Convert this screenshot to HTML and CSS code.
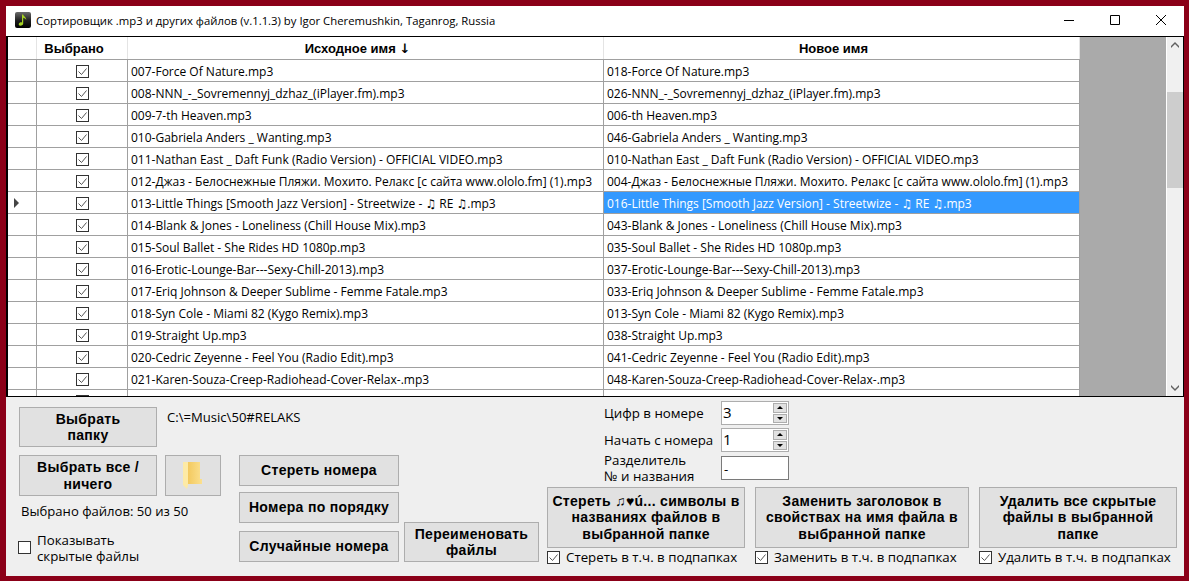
FILE: index.html
```html
<!DOCTYPE html>
<html lang="ru">
<head>
    <meta charset="UTF-8">
    <title>Сортировщик .mp3</title>
    <link rel="stylesheet" href="styles.css">
</head>
<body>
    <div class="window">
        <div class="titlebar">
            <svg class="app-icon" width="16" height="16" viewBox="0 0 16 16">
                <defs>
                    <linearGradient id="iconBg" x1="0" y1="0" x2="0" y2="1">
                        <stop offset="0" stop-color="#6a6a6a"/>
                        <stop offset="0.55" stop-color="#1c1c1c"/>
                        <stop offset="1" stop-color="#000"/>
                    </linearGradient>
                </defs>
                <rect width="16" height="16" rx="2" fill="url(#iconBg)"/>
                <path d="M7 2.500h1.200c.3 2 3.300 2.600 3 5.500-.6-1.500-1.900-2-3-2.300V11.500c0 1.300-1.300 2.200-2.700 2.200S3.500 13 3.800 11.800c.3-1.100 2-1.800 3.200-1.300z" fill="#a6d324"/>
            </svg>
            <span class="title-text">Сортировщик .mp3 и других файлов (v.1.1.3) by Igor Cheremushkin, Taganrog, Russia</span>
            <div class="win-buttons">
                <svg width="46" height="30" viewBox="0 0 46 30"><path d="M18 14.500h10" stroke="#000" fill="none"/></svg>
                <svg width="46" height="30" viewBox="0 0 46 30"><path d="M18.500 9.500h9v9h-9z" stroke="#000" fill="none"/></svg>
                <svg width="46" height="30" viewBox="0 0 46 30"><path d="M18 9l10 10M28 9L18 19" stroke="#000" fill="none"/></svg>
            </div>
        </div>

        <div class="grid-box">
            <div class="grid-body">
                <div class="grid-row grid-head">
                    <div class="c c-mark"></div>
                    <div class="c c-check">Выбрано</div>
                    <div class="c c-name">Исходное имя&nbsp;<span class="sort-arrow">↓</span></div>
                    <div class="c c-name">Новое имя</div>
                </div>
                <div id="rows"></div>
            </div>
            <div class="grid-empty"></div>
            <div class="scrollbar">
                <svg width="16" height="16" viewBox="0 0 16 16"><path d="M4 9l4-4 4 4v2L8 7l-4 4z" fill="#606060"/></svg>
                <div class="scroll-track"><div class="scroll-thumb"></div></div>
                <svg width="16" height="16" viewBox="0 0 16 16"><path d="M4 5l4 4 4-4v2l-4 4-4-4z" fill="#606060"/></svg>
            </div>
        </div>

        <div class="panel">
            <div class="col-left">
                <div class="left-top">
                    <button class="btn btn-main">Выбрать<br>папку</button>
                    <span class="path">C:\=Music\50#RELAKS</span>
                </div>
                <div class="left-mid">
                    <button class="btn btn-main btn-all">Выбрать все /<br>ничего</button>
                    <button class="btn btn-folder">
                        <svg width="20" height="27" viewBox="0 0 20 27">
                            <defs>
                                <linearGradient id="folderBack" x1="0" y1="0" x2="1" y2="0">
                                    <stop offset="0" stop-color="#f3c95f"/>
                                    <stop offset="1" stop-color="#fbe08f"/>
                                </linearGradient>
                            </defs>
                            <path d="M5 0h12v17h2v5H5z" fill="url(#folderBack)"/>
                            <path d="M0 0h5v23l-1 4-1-1-3-3z" fill="#fdeaa6"/>
                        </svg>
                    </button>
                </div>
                <div class="count">Выбрано файлов: 50 из 50</div>
                <label class="hidden-check">
                    <span class="box"></span>
                    <span>Показывать<br>скрытые файлы</span>
                </label>
            </div>

            <div class="col-numbers">
                <button class="btn btn-num">Стереть номера</button>
                <button class="btn btn-num btn-num-mid">Номера по порядку</button>
                <button class="btn btn-num">Случайные номера</button>
            </div>

            <div class="col-right">
                <div class="settings">
                    <div class="setting">
                        <span class="setting-label">Цифр в номере</span>
                        <div class="spin"><span>3</span><div class="spin-arrows"><i class="up"></i><i class="down"></i></div></div>
                    </div>
                    <div class="setting">
                        <span class="setting-label">Начать с номера</span>
                        <div class="spin"><span>1</span><div class="spin-arrows"><i class="up"></i><i class="down"></i></div></div>
                    </div>
                    <div class="setting setting-sep">
                        <span class="setting-label">Разделитель<br>№ и названия</span>
                        <div class="sep-input">-</div>
                    </div>
                </div>
                <div class="actions">
                    <button class="btn btn-rename">Переименовать<br>файлы</button>
                    <div class="action action-a">
                        <button class="btn btn-action">Стереть ♫♥ú... символы в<br>названиях файлов в<br>выбранной папке</button>
                        <label class="check-line"><span class="box checked"><svg width="13" height="13" viewBox="0 0 13 13"><path d="M2.500 6.500l3 3 5-6" stroke="#555" fill="none"/></svg></span>Стереть в т.ч. в подпапках</label>
                    </div>
                    <div class="action action-b">
                        <button class="btn btn-action">Заменить заголовок в<br>свойствах на имя файла в<br>выбранной папке</button>
                        <label class="check-line"><span class="box checked"><svg width="13" height="13" viewBox="0 0 13 13"><path d="M2.500 6.500l3 3 5-6" stroke="#555" fill="none"/></svg></span>Заменить в т.ч. в подпапках</label>
                    </div>
                    <div class="action action-c">
                        <button class="btn btn-action">Удалить все скрытые<br>файлы в выбранной<br>папке</button>
                        <label class="check-line"><span class="box checked"><svg width="13" height="13" viewBox="0 0 13 13"><path d="M2.500 6.500l3 3 5-6" stroke="#555" fill="none"/></svg></span>Удалить в т.ч. в подпапках</label>
                    </div>
                </div>
            </div>
        </div>
    </div>

    <script>
        const files = [
            ['007-Force Of Nature.mp3', '018-Force Of Nature.mp3'],
            ['008-NNN_-_Sovremennyj_dzhaz_(iPlayer.fm).mp3', '026-NNN_-_Sovremennyj_dzhaz_(iPlayer.fm).mp3'],
            ['009-7-th Heaven.mp3', '006-th Heaven.mp3'],
            ['010-Gabriela Anders _ Wanting.mp3', '046-Gabriela Anders _ Wanting.mp3'],
            ['011-Nathan East _ Daft Funk (Radio Version) - OFFICIAL VIDEO.mp3', '010-Nathan East _ Daft Funk (Radio Version) - OFFICIAL VIDEO.mp3'],
            ['012-Джаз - Белоснежные Пляжи. Мохито. Релакс [с сайта www.ololo.fm] (1).mp3', '004-Джаз - Белоснежные Пляжи. Мохито. Релакс [с сайта www.ololo.fm] (1).mp3'],
            ['013-Little Things [Smooth Jazz Version] - Streetwize - ♫ RE ♫.mp3', '016-Little Things [Smooth Jazz Version] - Streetwize - ♫ RE ♫.mp3'],
            ['014-Blank & Jones - Loneliness (Chill House Mix).mp3', '043-Blank & Jones - Loneliness (Chill House Mix).mp3'],
            ['015-Soul Ballet - She Rides HD 1080p.mp3', '035-Soul Ballet - She Rides HD 1080p.mp3'],
            ['016-Erotic-Lounge-Bar---Sexy-Chill-2013).mp3', '037-Erotic-Lounge-Bar---Sexy-Chill-2013).mp3'],
            ['017-Eriq Johnson & Deeper Sublime - Femme Fatale.mp3', '033-Eriq Johnson & Deeper Sublime - Femme Fatale.mp3'],
            ['018-Syn Cole - Miami 82 (Kygo Remix).mp3', '013-Syn Cole - Miami 82 (Kygo Remix).mp3'],
            ['019-Straight Up.mp3', '038-Straight Up.mp3'],
            ['020-Cedric Zeyenne - Feel You (Radio Edit).mp3', '041-Cedric Zeyenne - Feel You (Radio Edit).mp3'],
            ['021-Karen-Souza-Creep-Radiohead-Cover-Relax-.mp3', '048-Karen-Souza-Creep-Radiohead-Cover-Relax-.mp3'],
            ['', '']
        ];
        const checkSvg = '<span class="box checked"><svg width="13" height="13" viewBox="0 0 13 13"><path d="M2.500 6.500l3 3 5-6" stroke="#555" fill="none"/></svg></span>';
        const rows = document.getElementById('rows');
        files.forEach(([from, to], i) => {
            const row = document.createElement('div');
            row.className = 'grid-row';
            const active = i === 6;
            row.innerHTML =
                `<div class="c c-mark">${active ? '<i class="pointer"></i>' : ''}</div>` +
                `<div class="c c-check">${checkSvg}</div>` +
                `<div class="c c-name"></div>` +
                `<div class="c c-name${active ? ' selected' : ''}"></div>`;
            row.children[2].textContent = from;
            row.children[3].textContent = to;
            rows.appendChild(row);
        });
    </script>
</body>
</html>
```

FILE: styles.css
```css
* {
    box-sizing: border-box;
}
html, body {
    height: 100%;
}
body {
    margin: 0;
    padding: 6px 5px 5px 6px;
    background-color: #8b0018;
    font-family: "Open Sans", "DejaVu Sans", sans-serif;
    font-size: 12px;
    color: #000;
    overflow: hidden;
}
.window {
    height: 570px;
    display: flex;
    flex-direction: column;
    background-color: #efefef;
}
.titlebar {
    height: 30px;
    flex: none;
    display: flex;
    align-items: center;
    padding-left: 9px;
    background-color: #fff;
}
.app-icon {
    margin: -3px 5px 0 0;
}
.title-text {
    flex: 1;
    font-size: 11.33px;
    padding-bottom: 2px;
}
.win-buttons {
    display: flex;
}
.win-buttons svg {
    display: block;
}

.grid-box {
    height: 361px;
    flex: none;
    display: flex;
    border: 1px solid #000;
    border-left-width: 2px;
    background-color: #aaa;
    overflow: hidden;
}
.grid-body {
    width: 1072px;
    flex: none;
    background-color: #fff;
}
.grid-row {
    display: flex;
    height: 22px;
    border-bottom: 1px solid #a0a0a0;
}
.grid-head {
    height: 23px;
    font-family: "Liberation Sans", sans-serif;
    font-weight: bold;
    font-size: 13px;
}
.sort-arrow {
    font-family: "DejaVu Sans", sans-serif;
}
.c {
    height: 100%;
    display: flex;
    align-items: center;
    padding-top: 1px;
    border-right: 1px solid #a0a0a0;
    white-space: nowrap;
    overflow: hidden;
}
.c-mark {
    width: 29px;
    padding-left: 6px;
}
.c-check {
    width: 91px;
    justify-content: center;
}
.c-name {
    width: 476px;
    padding-left: 3px;
}
.grid-head .c-name,
.grid-head .c-check {
    justify-content: center;
    padding-left: 0;
    padding-right: 16px;
}
.grid-head .c {
    border-right-color: #e4e4e4;
}
.selected {
    background-color: #3399ff;
    color: #fff;
}
.pointer {
    width: 0;
    height: 0;
    border-left: 5px solid #444;
    border-top: 5px solid transparent;
    border-bottom: 5px solid transparent;
}
.grid-empty {
    flex: 1;
}
.scrollbar {
    width: 17px;
    flex: none;
    display: flex;
    flex-direction: column;
    align-items: center;
    background-color: #f0f0f0;
    border-left: 1px solid #fff;
}
.scrollbar svg {
    flex: none;
}
.scroll-track {
    flex: 1;
    width: 100%;
    padding-top: 39px;
}
.scroll-thumb {
    height: 96px;
    background-color: #cdcdcd;
}

.box {
    width: 13px;
    height: 13px;
    flex: none;
    display: block;
    background-color: #fff;
    border: 1px solid #333;
}
.box svg {
    display: block;
    margin: -1px;
}

.panel {
    flex: 1;
    display: flex;
    padding: 10px 7px 8px 13px;
    font-size: 13.3px;
}
.btn {
    display: block;
    background-color: #e1e1e1;
    border: 1px solid #adadad;
    padding: 0;
    font-family: "Liberation Sans", "DejaVu Sans", sans-serif;
    font-weight: bold;
    font-size: 14px;
    letter-spacing: 0.3px;
    line-height: 16.5px;
    color: #000;
    text-align: center;
}
.col-left {
    width: 220px;
    flex: none;
}
.left-top {
    display: flex;
    gap: 10px;
}
.btn-main {
    width: 138px;
    height: 40px;
    flex: none;
}
.path {
    white-space: nowrap;
    padding-top: 1px;
    font-size: 13.1px;
}
.left-mid {
    display: flex;
    gap: 8px;
    margin-top: 8px;
}
.btn-all {
    height: 41px;
}
.btn-folder {
    width: 56px;
    height: 41px;
    display: flex;
    align-items: center;
    justify-content: center;
    padding-bottom: 1px;
}
.count {
    margin: 6px 0 0 2px;
    line-height: 18px;
    font-size: 13.1px;
}
.hidden-check {
    display: flex;
    align-items: center;
    gap: 6px;
    margin: 12px 0 0 -1px;
    line-height: 16px;
}
.hidden-check .box {
    margin-top: -2px;
}
.col-numbers {
    width: 160px;
    flex: none;
    display: flex;
    flex-direction: column;
    gap: 7px;
    padding-top: 48px;
}
.btn-num {
    height: 31px;
}
.btn-num-mid {
    margin: -1px 0 1px;
}
.col-right {
    flex: 1;
    display: flex;
    flex-direction: column;
    padding-left: 5px;
}
.settings {
    padding-left: 200px;
    margin-top: -6px;
}
.setting {
    display: flex;
    align-items: center;
    height: 24px;
    margin-bottom: 3px;
}
.setting-label {
    width: 117px;
    white-space: nowrap;
    line-height: 16px;
}
.setting-sep {
    height: 24px;
    margin-top: 4px;
}
.spin {
    width: 68px;
    height: 24px;
    display: flex;
    background-color: #fff;
    border: 1px solid #adadad;
    padding-left: 1px;
    justify-content: space-between;
    font-size: 15px;
    line-height: 20px;
}
.spin-arrows {
    width: 16px;
    display: flex;
    flex-direction: column;
    gap: 1px;
    padding: 1px;
}
.spin-arrows i {
    flex: 1;
    background-color: #e1e1e1;
    border: 1px solid #adadad;
    position: relative;
}
.spin-arrows i::after {
    content: "";
    position: absolute;
    left: 3px;
    border-left: 3px solid transparent;
    border-right: 3px solid transparent;
}
.spin-arrows .up::after {
    top: 2px;
    border-bottom: 3px solid #000;
}
.spin-arrows .down::after {
    top: 2px;
    border-top: 3px solid #000;
}
.sep-input {
    width: 68px;
    height: 24px;
    background-color: #fff;
    border: 1px solid #7a7a7a;
    padding-left: 2px;
    line-height: 24px;
}
.actions {
    display: flex;
    align-items: flex-end;
    margin-top: auto;
}
.btn-rename {
    width: 135px;
    height: 40px;
    margin: 0 8px 6px 0;
    flex: none;
}
.action {
    flex: none;
}
.action-a {
    width: 198px;
    margin-right: 10px;
}
.action-b {
    width: 214px;
    margin-right: 10px;
}
.action-c {
    width: 198px;
}
.btn-action {
    width: 100%;
    height: 61px;
}
.check-line {
    display: flex;
    align-items: center;
    gap: 6px;
    height: 20px;
    padding-bottom: 2px;
    white-space: nowrap;
}
```
